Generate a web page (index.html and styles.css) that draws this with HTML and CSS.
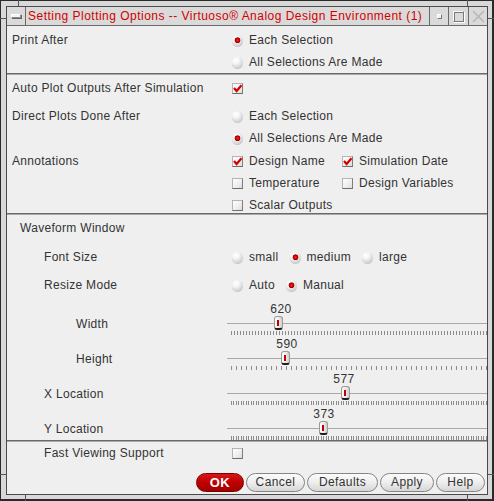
FILE: index.html
```html
<!DOCTYPE html>
<html>
<head>
<meta charset="utf-8">
<title>Setting Plotting Options</title>
<link rel="stylesheet" href="styles.css">
</head>
<body>
<div class="window">
  <span class="mark mark-v mark-top1"></span>
  <span class="mark mark-v mark-top2"></span>
  <span class="mark mark-h mark-left1"></span>
  <span class="mark mark-h mark-left2"></span>
  <span class="mark mark-h mark-right1"></span>
  <span class="mark mark-h mark-right2"></span>
  <span class="mark mark-v mark-bot1"></span>
  <span class="mark mark-v mark-bot2"></span>
  <div class="inner">
    <div class="titlebar">
      <div class="tb-btn tb-menu"><span class="menu-icon"></span></div>
      <div class="title">Setting Plotting Options -- Virtuoso® Analog Design Environment (1)</div>
      <div class="tb-btn tb-min"><span class="min-icon"></span></div>
      <div class="tb-btn tb-max"><span class="max-icon"></span></div>
      <div class="tb-btn tb-close">
        <svg width="13" height="13" viewBox="0 0 13 13"><path d="M1 1 L12 12 M12 1 L1 12" stroke="#b8b8b8" stroke-width="1.6" fill="none"/></svg>
      </div>
    </div>
    <div class="content">
      <div class="field g-print">
        <div class="label">Print After</div>
        <div class="controls">
          <div class="line"><span class="radio on"></span><span>Each Selection</span></div>
          <div class="line"><span class="radio"></span><span>All Selections Are Made</span></div>
        </div>
      </div>
      <div class="sep sep-1"></div>
      <div class="field g-auto">
        <div class="label">Auto Plot Outputs After Simulation</div>
        <div class="controls">
          <div class="line"><span class="check on"><svg width="11" height="11" viewBox="0 0 11 11"><path d="M2 5 L4.6 8 L9.5 2.2" stroke="#d40000" stroke-width="2.2" fill="none"/></svg></span></div>
        </div>
      </div>
      <div class="field g-direct">
        <div class="label">Direct Plots Done After</div>
        <div class="controls">
          <div class="line"><span class="radio"></span><span>Each Selection</span></div>
          <div class="line"><span class="radio on"></span><span>All Selections Are Made</span></div>
        </div>
      </div>
      <div class="field g-annot">
        <div class="label">Annotations</div>
        <div class="controls">
          <div class="line cols">
            <div class="opt"><span class="check on"><svg width="11" height="11" viewBox="0 0 11 11"><path d="M2 5 L4.6 8 L9.5 2.2" stroke="#d40000" stroke-width="2.2" fill="none"/></svg></span><span>Design Name</span></div>
            <div class="opt"><span class="check on"><svg width="11" height="11" viewBox="0 0 11 11"><path d="M2 5 L4.6 8 L9.5 2.2" stroke="#d40000" stroke-width="2.2" fill="none"/></svg></span><span>Simulation Date</span></div>
          </div>
          <div class="line cols">
            <div class="opt"><span class="check"></span><span>Temperature</span></div>
            <div class="opt"><span class="check"></span><span>Design Variables</span></div>
          </div>
          <div class="line cols">
            <div class="opt"><span class="check"></span><span>Scalar Outputs</span></div>
          </div>
        </div>
      </div>
      <div class="sep sep-2"></div>
      <div class="section-title">Waveform Window</div>
      <div class="field g-font">
        <div class="label sub">Font Size</div>
        <div class="controls">
          <div class="line inline">
            <div class="opt"><span class="radio"></span><span>small</span></div>
            <div class="opt"><span class="radio on"></span><span>medium</span></div>
            <div class="opt"><span class="radio"></span><span>large</span></div>
          </div>
        </div>
      </div>
      <div class="field g-resize">
        <div class="label sub">Resize Mode</div>
        <div class="controls">
          <div class="line inline">
            <div class="opt"><span class="radio"></span><span>Auto</span></div>
            <div class="opt"><span class="radio on"></span><span>Manual</span></div>
          </div>
        </div>
      </div>
      <div class="sliders">
        <div class="slider-row">
          <div class="slabel deep">Width</div>
          <div class="slider">
            <div class="slider-value" style="left:54px">620</div>
            <div class="slider-track"><span class="thumb" style="left:47px"></span></div>
            <div class="slider-ticks ticks-3"></div>
          </div>
        </div>
        <div class="slider-row">
          <div class="slabel deep">Height</div>
          <div class="slider">
            <div class="slider-value" style="left:60px">590</div>
            <div class="slider-track"><span class="thumb" style="left:54px"></span></div>
            <div class="slider-ticks ticks-5"></div>
          </div>
        </div>
        <div class="slider-row">
          <div class="slabel sub">X Location</div>
          <div class="slider">
            <div class="slider-value" style="left:117px">577</div>
            <div class="slider-track"><span class="thumb" style="left:114px"></span></div>
            <div class="slider-ticks ticks-dense"></div>
          </div>
        </div>
        <div class="slider-row">
          <div class="slabel sub">Y Location</div>
          <div class="slider">
            <div class="slider-value" style="left:97px">373</div>
            <div class="slider-track"><span class="thumb" style="left:92px"></span></div>
            <div class="slider-ticks ticks-dense"></div>
          </div>
        </div>
      </div>
      <div class="sep sep-3"></div>
      <div class="field g-fast">
        <div class="label sub">Fast Viewing Support</div>
        <div class="controls">
          <div class="line"><span class="check"></span></div>
        </div>
      </div>
      <div class="buttons">
        <button class="btn btn-ok">OK</button>
        <button class="btn btn-cancel">Cancel</button>
        <button class="btn btn-defaults">Defaults</button>
        <button class="btn btn-apply">Apply</button>
        <button class="btn btn-help">Help</button>
      </div>
    </div>
  </div>
</div>
</body>
</html>
```
FILE: styles.css
```css
* { box-sizing: border-box; }
html, body { margin: 0; padding: 0; }
body {
  width: 494px;
  height: 501px;
  overflow: hidden;
  background: #d8d8d8;
  font-family: "Liberation Sans", Arial, sans-serif;
  font-size: 12px;
  color: #333;
  letter-spacing: 0.3px;
}
.window {
  position: relative;
  width: 494px;
  height: 501px;
  background: #d8d8d8;
  border: 1px solid #2a2a2a;
  border-right-width: 2px;
  border-bottom-width: 2px;
  padding: 5px 4px 4px 5px;
}
.mark { position: absolute; background: #555; }
.mark-v { width: 1px; height: 6px; }
.mark-h { width: 6px; height: 1px; }
.mark-top1 { left: 17px; top: -1px; }
.mark-top2 { left: 466px; top: -1px; }
.mark-bot1 { left: 24px; bottom: -2px; }
.mark-bot2 { left: 466px; bottom: -2px; }
.mark-left1 { left: -1px; top: 17px; }
.mark-left2 { left: -1px; top: 473px; }
.mark-right1 { right: -2px; top: 17px; }
.mark-right2 { right: -2px; top: 473px; }

.inner {
  height: 100%;
  border: 1px solid #4a4a4a;
  display: flex;
  flex-direction: column;
}
.titlebar {
  height: 19px;
  flex: none;
  display: flex;
  align-items: stretch;
  background: #dadada;
  border-bottom: 1px solid #6a6a6a;
}
.tb-btn {
  flex: none;
  display: flex;
  align-items: center;
  justify-content: center;
}
.tb-menu { width: 19px; border-right: 1px solid #6a6a6a; }
.menu-icon {
  width: 10px; height: 4px;
  background: #f4f4f4;
  border: 1px solid #8a8a8a;
  border-top-color: #fff;
  border-left-color: #fff;
  box-shadow: 1px 1px 0 #666;
}
.title {
  flex: 1;
  padding-left: 2px;
  color: #d20000;
  font-size: 12px;
  line-height: 18px;
  letter-spacing: 0.48px;
  white-space: nowrap;
  overflow: hidden;
}
.tb-min, .tb-max, .tb-close { border-left: 1px solid #6a6a6a; }
.tb-min { width: 19px; }
.tb-max { width: 20px; }
.tb-close { width: 19px; }
.min-icon {
  width: 5px; height: 5px;
  background: #f0f0f0;
  border: 1px solid #777;
  border-top-color: #fff;
  border-left-color: #fff;
}
.max-icon {
  width: 11px; height: 11px;
  border: 1px solid #7a7a7a;
  border-top-color: #fafafa;
  border-left-color: #fafafa;
  box-shadow: inset 1px 1px 0 #7a7a7a, 1px 1px 0 #fff;
}

.content {
  flex: 1;
  background: #efefef;
  padding-top: 5px;
  display: flex;
  flex-direction: column;
}
.field {
  display: grid;
  grid-template-columns: 225px 1fr;
}
.label {
  padding-left: 5px;
  height: 18px;
  line-height: 19px;
  white-space: nowrap;
}
.label.sub { padding-left: 37px; }
.controls {
  display: flex;
  flex-direction: column;
  gap: 4px;
}
.line {
  height: 18px;
  display: flex;
  align-items: center;
  gap: 6px;
  white-space: nowrap;
}
.line.cols {
  display: grid;
  grid-template-columns: 110px auto;
  gap: 0;
}
.line.inline { gap: 11px; }
.opt { display: flex; align-items: center; gap: 6px; }

.radio {
  flex: none;
  width: 11px; height: 11px;
  border-radius: 50%;
  background: radial-gradient(circle at 35% 30%, #ffffff 0, #f6f6f6 30%, #d4d4d4 70%, #a9a9a9 100%);
  box-shadow: 0 1px 0 #c8c8c8;
}
.radio.on {
  background:
    radial-gradient(circle at 50% 48%, #ff2a2a 0, #d60000 1.6px, #9c0000 2.6px, rgba(160,0,0,0) 3.2px),
    radial-gradient(circle at 35% 30%, #ffffff 0, #f6f6f6 30%, #d4d4d4 70%, #a9a9a9 100%);
}
.check {
  flex: none;
  width: 11px; height: 11px;
  background: linear-gradient(135deg, #ffffff 0, #eeeeee 60%, #dcdcdc 100%);
  border: 1px solid #b4b4b4;
  border-right-color: #7d7d7d;
  border-bottom-color: #6d6d6d;
  position: relative;
}
.check svg { position: absolute; left: -1px; top: -1px; }

.sep { height: 2px; flex: none; background: #6a6a6a; border-bottom: 1px solid #a8a8a8; }
.sep-1 { margin-top: 2px; }
.g-auto { margin-top: 4px; }
.g-direct { margin-top: 10px; }
.g-annot { margin-top: 5px; }
.sep-2 { margin-top: -1px; }
.section-title {
  margin-top: 4px;
  padding-left: 13px;
  height: 18px;
  line-height: 18px;
}
.g-font { margin-top: 11px; }
.g-resize { margin-top: 10px; }

.sliders { margin-top: 7px; display: flex; flex-direction: column; }
.slider-row {
  display: grid;
  grid-template-columns: 220px 1fr;
  height: 35px;
}
.slabel {
  padding-top: 14px;
  line-height: 19px;
  white-space: nowrap;
}
.slabel.deep { padding-left: 69px; }
.slabel.sub { padding-left: 37px; }
.slider {
  position: relative;
  padding-top: 14px;
}
.slider-value {
  position: absolute;
  top: 1px;
  transform: translateX(-50%);
  line-height: 14px;
  font-size: 12px;
  letter-spacing: 0.5px;
}
.slider-track {
  position: relative;
  height: 15px;
  background: linear-gradient(#a9a9a9, #a9a9a9) 0 8px / 100% 1px no-repeat;
}
.thumb {
  position: absolute;
  top: 1px;
  width: 9px;
  height: 14px;
  border-radius: 3px;
  border: 1px solid #9a9a9a;
  border-bottom: 2px solid #1e1e1e;
  background: linear-gradient(90deg, #ffffff 0, #f2f2f2 40%, #cfcfcf 100%);
}
.thumb::after {
  content: "";
  position: absolute;
  left: 2px;
  top: 3px;
  width: 2px;
  height: 6px;
  background: #c00000;
}
.slider-ticks {
  margin: 1px 0 0 4px;
  height: 4px;
}
.ticks-3 { background: repeating-linear-gradient(90deg, #8c8c8c 0 1px, transparent 1px 3px); }
.ticks-5 { background: repeating-linear-gradient(90deg, #8c8c8c 0 1px, transparent 1px 5px); }
.ticks-dense { background: repeating-linear-gradient(90deg, #8c8c8c 0 1px, transparent 1px 2px, #8c8c8c 2px 3px, transparent 3px 5px); }

.sep-3 { margin-top: -1px; }
.g-fast { margin-top: 2px; }

.buttons {
  margin-top: 11px;
  display: flex;
  justify-content: flex-end;
  gap: 2px;
  padding-right: 2px;
}
.btn {
  height: 19px;
  padding: 0;
  border-radius: 10px;
  border: 1px solid #858585;
  background: linear-gradient(#fbfbfb 0, #eeeeee 50%, #d6d6d6 100%);
  font-family: "Liberation Sans", Arial, sans-serif;
  font-size: 12px;
  letter-spacing: 0.4px;
  color: #333;
  line-height: 17px;
}
.btn-ok {
  width: 48px;
  background: linear-gradient(#d81818 0, #c00000 50%, #a00000 100%);
  border-color: #7a0000;
  color: #fff;
  font-weight: bold;
  font-size: 13px;
}
.btn-cancel { width: 59px; }
.btn-defaults { width: 71px; }
.btn-apply { width: 54px; }
.btn-help { width: 49px; }
```
